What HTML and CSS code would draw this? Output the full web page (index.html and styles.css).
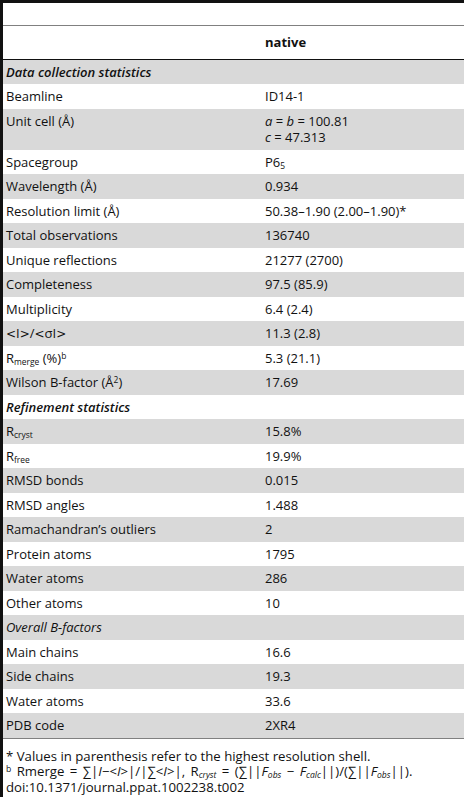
FILE: index.html
```html
<!DOCTYPE html>
<html lang="en">
<head>
    <meta charset="UTF-8">
    <meta name="viewport" content="width=device-width, initial-scale=1.0">
    <title>Table 2. Data collection and refinement statistics</title>
    <link rel="stylesheet" href="styles.css">
</head>
<body>
    <div class="page">
        <table class="stats">
            <colgroup>
                <col class="col-label">
                <col class="col-value">
            </colgroup>
            <thead>
                <tr>
                    <th></th>
                    <th>native</th>
                </tr>
            </thead>
            <tbody>
                <tr class="shade section"><td colspan="2"><i>Data collection statistics</i></td></tr>
                <tr><td>Beamline</td><td>ID14-1</td></tr>
                <tr class="shade"><td>Unit cell (Å)</td><td><i>a</i> = <i>b</i> = 100.81<br><i>c</i> = 47.313</td></tr>
                <tr><td>Spacegroup</td><td>P6<sub>5</sub></td></tr>
                <tr class="shade"><td>Wavelength (Å)</td><td>0.934</td></tr>
                <tr><td>Resolution limit (Å)</td><td>50.38–1.90 (2.00–1.90)*</td></tr>
                <tr class="shade"><td>Total observations</td><td>136740</td></tr>
                <tr><td>Unique reflections</td><td>21277 (2700)</td></tr>
                <tr class="shade"><td>Completeness</td><td>97.5 (85.9)</td></tr>
                <tr><td>Multiplicity</td><td>6.4 (2.4)</td></tr>
                <tr class="shade"><td><span class="sym">&lt;</span>I<span class="sym">&gt;</span>/<span class="sym">&lt;</span>σI<span class="sym">&gt;</span></td><td>11.3 (2.8)</td></tr>
                <tr><td>R<sub>merge</sub> (%)<sup>b</sup></td><td>5.3 (21.1)</td></tr>
                <tr class="shade"><td>Wilson B-factor (Å<sup>2</sup>)</td><td>17.69</td></tr>
                <tr class="section"><td colspan="2"><i>Refinement statistics</i></td></tr>
                <tr class="shade"><td>R<sub>cryst</sub></td><td>15.8%</td></tr>
                <tr><td>R<sub>free</sub></td><td>19.9%</td></tr>
                <tr class="shade"><td>RMSD bonds</td><td>0.015</td></tr>
                <tr><td>RMSD angles</td><td>1.488</td></tr>
                <tr class="shade"><td>Ramachandran’s outliers</td><td>2</td></tr>
                <tr><td>Protein atoms</td><td>1795</td></tr>
                <tr class="shade"><td>Water atoms</td><td>286</td></tr>
                <tr><td>Other atoms</td><td>10</td></tr>
                <tr class="shade"><td colspan="2"><i>Overall B-factors</i></td></tr>
                <tr><td>Main chains</td><td>16.6</td></tr>
                <tr class="shade"><td>Side chains</td><td>19.3</td></tr>
                <tr><td>Water atoms</td><td>33.6</td></tr>
                <tr class="shade last"><td>PDB code</td><td>2XR4</td></tr>
            </tbody>
        </table>

        <div class="notes">
            <p>* Values in parenthesis refer to the highest resolution shell.</p>
            <p class="formula"><sup>b</sup> Rmerge = ∑|<i>I</i>−&lt;<i>I</i>&gt;|/|∑&lt;<i>I</i>&gt;|, R<sub><i>cryst</i></sub> = (∑||<i>F<sub>obs</sub></i> − <i>F<sub>calc</sub></i>||)/(∑||<i>F<sub>obs</sub></i>||).</p>
            <p>doi:10.1371/journal.ppat.1002238.t002</p>
        </div>
    </div>
</body>
</html>
```

FILE: styles.css
```css
body {
    margin: 0;
    padding: 0;
    background-color: #ffffff;
    color: #111111;
    font-family: "Open Sans", "DejaVu Sans", sans-serif;
    font-size: 13px;
}
.page {
    border-top: 3px solid #111111;
    border-left: 3px solid #111111;
    height: 794px;
}
.stats {
    width: 100%;
    margin-top: 22px;
    border-collapse: collapse;
    table-layout: fixed;
}
.col-label {
    width: 259px;
}
.stats th {
    text-align: left;
    font-weight: bold;
    line-height: 16.5px;
    padding: 8px 3px;
    border-top: 1px solid #808080;
    border-bottom: 1px solid #111111;
}
.stats td {
    line-height: 16.5px;
    padding: 4px 3px;
    vertical-align: top;
    white-space: nowrap;
}
.stats tr.shade td {
    background-color: #d9d9d9;
}
.stats tr.section td {
    font-weight: 600;
}
.stats tr.last td {
    border-bottom: 1px solid #808080;
}
.sym {
    font-family: "DejaVu Sans", sans-serif;
    font-size: 12px;
    line-height: 0;
}
sub,
sup {
    font-size: 65%;
    line-height: 0;
}
sub {
    vertical-align: -0.2em;
}
sup {
    vertical-align: 0.45em;
}
.notes {
    margin-top: 10px;
    padding-left: 3px;
    font-size: 13.2px;
}
.notes p {
    margin: 0;
    line-height: 15.6px;
    white-space: nowrap;
}
.formula {
    word-spacing: 2px;
}
```
